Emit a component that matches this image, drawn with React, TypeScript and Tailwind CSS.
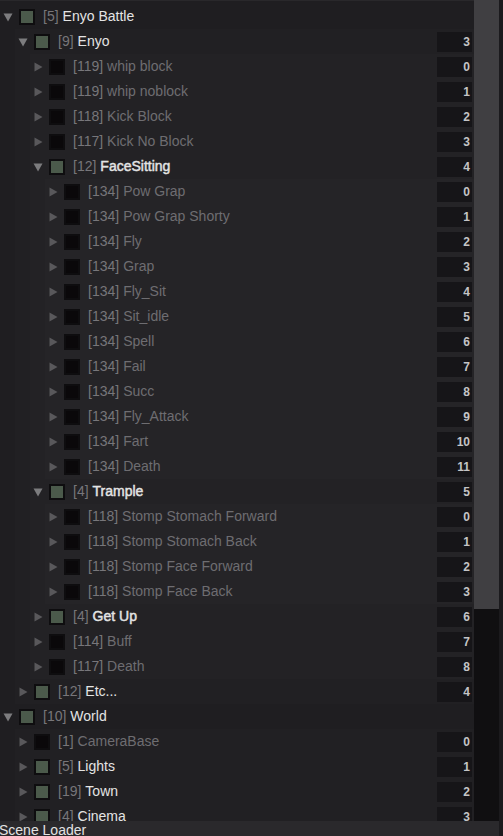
type TreeNode = {
  id: number
  name: string
  active?: boolean
  bold?: boolean
  open?: boolean
  index?: number
  children?: TreeNode[]
}

const leaf = (id: number, name: string, index: number, active = false): TreeNode => ({
  id,
  name,
  index,
  active,
})

const tree: TreeNode[] = [
  {
    id: 5,
    name: 'Enyo Battle',
    active: true,
    open: true,
    children: [
      {
        id: 9,
        name: 'Enyo',
        active: true,
        open: true,
        index: 3,
        children: [
          leaf(119, 'whip block', 0),
          leaf(119, 'whip noblock', 1),
          leaf(118, 'Kick Block', 2),
          leaf(117, 'Kick No Block', 3),
          {
            id: 12,
            name: 'FaceSitting',
            active: true,
            bold: true,
            open: true,
            index: 4,
            children: [
              'Pow Grap',
              'Pow Grap Shorty',
              'Fly',
              'Grap',
              'Fly_Sit',
              'Sit_idle',
              'Spell',
              'Fail',
              'Succ',
              'Fly_Attack',
              'Fart',
              'Death',
            ].map((n, i) => leaf(134, n, i)),
          },
          {
            id: 4,
            name: 'Trample',
            active: true,
            bold: true,
            open: true,
            index: 5,
            children: [
              'Stomp Stomach Forward',
              'Stomp Stomach Back',
              'Stomp Face Forward',
              'Stomp Face Back',
            ].map((n, i) => leaf(118, n, i)),
          },
          { id: 4, name: 'Get Up', active: true, bold: true, index: 6 },
          leaf(114, 'Buff', 7),
          leaf(117, 'Death', 8),
        ],
      },
      leaf(12, 'Etc...', 4, true),
    ],
  },
  {
    id: 10,
    name: 'World',
    active: true,
    open: true,
    children: [
      leaf(1, 'CameraBase', 0),
      leaf(5, 'Lights', 1, true),
      leaf(19, 'Town', 2, true),
      leaf(4, 'Cinema', 3, true),
    ],
  },
]

const Arrow = ({ open }: { open?: boolean }) => (
  <svg width="10" height="10" viewBox="0 0 10 10" className="shrink-0">
    {open ? (
      <polygon points="0.5,1.5 9.5,1.5 5,9.5" fill="#7c7c7e" />
    ) : (
      <polygon points="1.5,0.5 9.5,5 1.5,9.5" fill="#59585b" />
    )}
  </svg>
)

const Row = ({ node }: { node: TreeNode }) => (
  <div className="flex h-[25px] items-center pl-[3px]">
    <Arrow open={node.open} />
    <div
      className={`ml-[6px] h-4 w-4 shrink-0 border-2 border-[#0e0d0f] ${
        node.active ? 'bg-[#4b5a4b]' : 'bg-[#0a080a]'
      }`}
    />
    <span className="ml-2 whitespace-nowrap text-[14px] text-[#77767a]">[{node.id}]</span>
    <span
      className={`ml-[4px] whitespace-nowrap text-[14px] ${
        node.active ? 'text-[#e4e4e4]' : 'text-[#6e6d71]'
      } ${node.bold ? '[-webkit-text-stroke:0.45px_#e4e4e4]' : ''}`}
    >
      {node.name}
    </span>
    {node.index !== undefined && (
      <div className="ml-auto mr-[2px] flex h-5 w-[35px] shrink-0 items-center justify-end bg-[#161518] pr-[2px] text-[12px] font-bold text-[#c4c4c6]">
        {node.index}
      </div>
    )}
  </div>
)

const Node = ({ node }: { node: TreeNode }) => (
  <div>
    <Row node={node} />
    {node.open && node.children && (
      <div className="ml-[15px] bg-white/[0.012]">
        {node.children.map((c, i) => (
          <Node key={i} node={c} />
        ))}
      </div>
    )}
  </div>
)

export default function App() {
  return (
    <div
      className="flex h-[836px] w-[503px] flex-col overflow-hidden bg-[#1b1a1d]"
      style={{ fontFamily: '"Liberation Sans", Arial, sans-serif' }}
    >
      <div className="flex h-[821px] overflow-hidden">
        <div className="w-[474px] shrink-0 border-t border-[#29282b] bg-[#1f1e21] pt-[3px]">
          {tree.map((n, i) => (
            <Node key={i} node={n} />
          ))}
        </div>
        <div className="flex w-[25px] shrink-0 flex-col bg-[#100f11]">
          <div className="h-[609px] bg-[#403f42]" />
        </div>
        <div className="flex-1 bg-[#1b1a1d]" />
      </div>
      <div className="flex h-[15px] overflow-hidden">
        <div className="w-[499px] bg-[#2a292c]">
          <div className="-ml-[1px] pt-[1px] text-[14px] leading-[17px] text-[#e2e2e2]">Scene Loader</div>
        </div>
      </div>
    </div>
  )
}
